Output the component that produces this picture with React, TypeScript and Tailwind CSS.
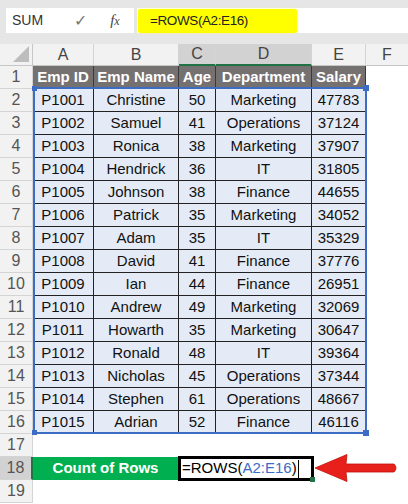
import React from "react";

type Row = [string, string, string, string, string];

const rows: Row[] = [
  ["P1001", "Christine", "50", "Marketing", "47783"],
  ["P1002", "Samuel", "41", "Operations", "37124"],
  ["P1003", "Ronica", "38", "Marketing", "37907"],
  ["P1004", "Hendrick", "36", "IT", "31805"],
  ["P1005", "Johnson", "38", "Finance", "44655"],
  ["P1006", "Patrick", "35", "Marketing", "34052"],
  ["P1007", "Adam", "35", "IT", "35329"],
  ["P1008", "David", "41", "Finance", "37776"],
  ["P1009", "Ian", "44", "Finance", "26951"],
  ["P1010", "Andrew", "49", "Marketing", "32069"],
  ["P1011", "Howarth", "35", "Marketing", "30647"],
  ["P1012", "Ronald", "48", "IT", "39364"],
  ["P1013", "Nicholas", "45", "Operations", "37344"],
  ["P1014", "Stephen", "61", "Operations", "48667"],
  ["P1015", "Adrian", "52", "Finance", "46116"],
];

const widths = ["w-[61px]", "w-[85px]", "w-[37px]", "w-[96px]", "w-[54px]"];
const headers = ["Emp ID", "Emp Name", "Age", "Department", "Salary"];
const letters = ["A", "B", "C", "D", "E"];

function RowHead({ n, active }: { n: number; active?: boolean }) {
  return (
    <div
      className={`flex w-[33px] shrink-0 items-center justify-center border-b border-[#d4d4d4] text-[16px] text-[#555] ${
        active ? "bg-[#d2d2d2] border-r-2 border-r-[#217346]" : "bg-[#f2f2f2] border-r"
      }`}
    >
      {n}
    </div>
  );
}

function Arrow() {
  return (
    <svg width="86" height="30" viewBox="0 0 86 30">
      <path d="M1 15 L33 1.5 L32 11 L80 11 Q84 15 80 19 L32 19 L33 28.5 Z" fill="#e8201c" stroke="#c0100c" strokeWidth="0.8" />
    </svg>
  );
}

export default function App() {
  return (
    <div className="h-[504px] w-[408px] overflow-hidden bg-white" style={{ fontFamily: '"Liberation Sans", Arial, sans-serif' }}>
      {/* formula bar */}
      <div className="flex h-[44px] bg-[#e6e6e6] pt-[8px]">
        <div className="ml-[6px] flex h-[25px] w-[128px] items-center bg-white text-[14px] text-[#333]">
          <span className="ml-[6px]">SUM</span>
          <span className="ml-[31px] text-[16px] text-[#777]">✓</span>
          <span className="ml-[23px] text-[15px] italic text-[#444]" style={{ fontFamily: '"Liberation Serif", serif' }}>
            f<span className="text-[12px]">x</span>
          </span>
        </div>
        <div className="ml-[3px] flex h-[25px] flex-1 bg-white">
          <div className="ml-[1px] mt-[1px] flex h-[24px] w-[159px] items-center rounded-[2px] bg-[#ffff00] pl-[12px] text-[13.5px] tracking-[-0.4px] text-[#222] shadow-[0_0_2px_#ffff60]">
            =ROWS(A2:E16)
          </div>
        </div>
      </div>

      <div className="relative">
        {/* column headers */}
        <div className="flex h-[22px] text-[16px] text-[#444]">
          <div className="relative w-[33px] shrink-0 border-r border-b border-[#c6c6c6] bg-[#f2f2f2]">
            <svg width="16" height="16" className="absolute right-[3px] bottom-[3px]">
              <polygon points="16,0 16,16 0,16" fill="#bdbdbd" />
            </svg>
          </div>
          {letters.map((l, i) => {
            const sel = l === "C" || l === "D";
            return (
              <div
                key={l}
                className={`flex ${widths[i]} shrink-0 items-center justify-center border-r border-[#d4d4d4] ${
                  sel ? "border-b-2 border-b-[#217346] bg-[#d2d2d2]" : "border-b border-b-[#c6c6c6] bg-[#f2f2f2]"
                }`}
              >
                {l}
              </div>
            );
          })}
          <div className="flex flex-1 items-center justify-center border-b border-[#c6c6c6] bg-[#f2f2f2]">F</div>
        </div>

        {/* row 1 headers */}
        <div className="flex h-[23px]">
          <RowHead n={1} />
          {headers.map((h, i) => (
            <div
              key={h}
              className={`flex ${widths[i]} shrink-0 items-center justify-center border-r border-b border-[#3a3a3a] bg-[#767171] text-[15px] font-bold text-white`}
            >
              {h}
            </div>
          ))}
        </div>

        {/* data */}
        {rows.map((r, ri) => (
          <div key={r[0]} className="flex h-[23px]">
            <RowHead n={ri + 2} />
            {r.map((v, i) => (
              <div
                key={i}
                className={`flex ${widths[i]} shrink-0 items-center justify-center border-r border-b border-[#222] bg-[#e4ebf6] text-[15px] text-[#111]`}
              >
                {v}
              </div>
            ))}
          </div>
        ))}

        {/* row 17 */}
        <div className="flex h-[23px]">
          <RowHead n={17} />
        </div>

        {/* row 18 */}
        <div className="flex h-[23px]">
          <RowHead n={18} active />
          <div className="flex w-[145px] shrink-0 items-center justify-center bg-[#00b050] text-[15px] font-bold text-white">
            Count of Rows
          </div>
          <div className="relative flex h-[25px] w-[136px] shrink-0 -translate-y-[1px] items-center border-[3px] border-black bg-white pl-[1px] text-[15px] text-black">
            =ROWS(<span className="text-[#3b6cc5]">A2:E16</span>)
            <span className="ml-[1px] h-[18px] w-[1px] bg-black" />
            <span className="absolute -right-[4px] -bottom-[4px] h-[5px] w-[5px] bg-[#217346]" />
          </div>
          <div className="-mt-[4px]">
            <Arrow />
          </div>
        </div>

        {/* row 19 */}
        <div className="flex h-[23px]">
          <RowHead n={19} />
        </div>

        {/* reference highlight A2:E16 */}
        <div className="pointer-events-none absolute left-[33px] top-[43px] h-[347px] w-[334px] border-2 border-[#3c6cc3]">
          <span className="absolute -left-[3px] -top-[3px] h-[5px] w-[5px] bg-[#3c6cc3]" />
          <span className="absolute -right-[4px] -top-[4px] h-[6px] w-[6px] bg-[#3c6cc3]" />
          <span className="absolute -left-[3px] -bottom-[3px] h-[5px] w-[5px] bg-[#3c6cc3]" />
          <span className="absolute -right-[4px] -bottom-[4px] h-[6px] w-[6px] bg-[#3c6cc3]" />
        </div>
      </div>
    </div>
  );
}
